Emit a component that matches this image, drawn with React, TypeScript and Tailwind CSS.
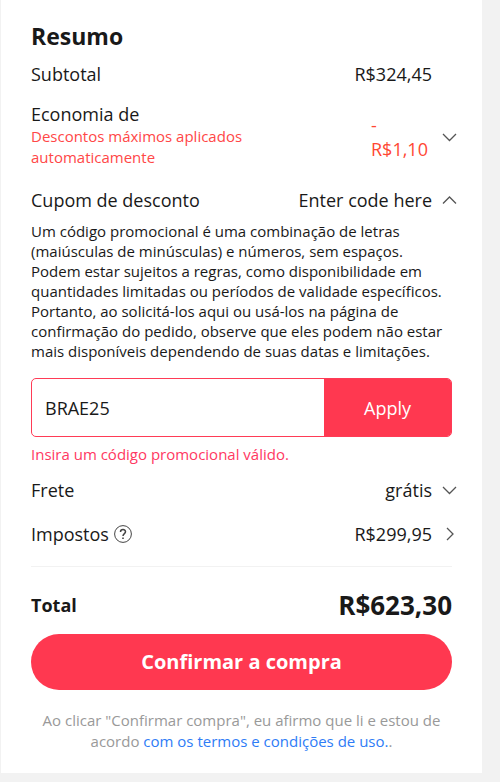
import React, { useState } from 'react';

type ChevronProps = {
  direction: 'up' | 'down' | 'right';
};

const paths = {
  up: 'M3 13.5 L9.5 7 L16 13.5',
  down: 'M3 7 L9.5 13.5 L16 7',
  right: 'M7 4 L13 10 L7 16',
};

const Chevron: React.FC<ChevronProps> = ({ direction }) => (
  <svg
    viewBox="0 0 20 20"
    className="-mr-2 ml-2 h-5 w-5 shrink-0"
    fill="none"
    stroke="#555"
    strokeWidth="1.3"
    aria-hidden="true"
  >
    <path d={paths[direction]} />
  </svg>
);

const HelpIcon = () => (
  <svg viewBox="0 0 20 20" className="h-5 w-5" fill="none" stroke="#444" aria-hidden="true">
    <circle cx="10" cy="10" r="8.4" strokeWidth="1" />
    <path d="M7.5 8 C7.5 4.7 12.5 4.8 12.5 7.8 C12.5 9.6 10 9.6 10 12" strokeWidth="1.5" />
    <path d="M10 13.4 V15" strokeWidth="1.6" />
  </svg>
);

const App: React.FC = () => {
  const [code, setCode] = useState('BRAE25');

  return (
    <div className="min-h-screen bg-[#f2f2f2] pr-[18px] pb-2 pl-px font-['Open_Sans',sans-serif] text-lg leading-6 font-medium text-[#191919]">
      <main className="bg-white px-[30px] pt-5 pb-[21px]">
        <h1 className="text-[23px] leading-8 font-bold">Resumo</h1>

        <div className="mt-[10px] flex items-center justify-between pr-5">
          <span>Subtotal</span>
          <span>R$324,45</span>
        </div>

        {/* Discounts */}
        <div className="mt-4 flex items-center justify-between">
          <div className="w-[240px]">
            <div>Economia de</div>
            <p className="text-[15px] leading-[21px] font-normal text-[#ff4747]">
              Descontos máximos aplicados automaticamente
            </p>
          </div>
          <button type="button" aria-label="Ver descontos" className="flex items-center pt-1 text-left text-[#ff4733]">
            <span className="mr-1 w-[57px]">
              -<br />
              R$1,10
            </span>
            <Chevron direction="down" />
          </button>
        </div>

        {/* Promo code */}
        <div className="mt-5 flex items-center justify-between">
          <label htmlFor="promo">Cupom de desconto</label>
          <button type="button" className="flex items-center" aria-expanded="true">
            Enter code here
            <Chevron direction="up" />
          </button>
        </div>
        <p className="mt-[9px] text-[15px] leading-5 font-normal">
          Um código promocional é uma combinação de letras (maiúsculas de minúsculas) e números, sem
          espaços. Podem estar sujeitos a regras, como disponibilidade em quantidades limitadas ou
          períodos de validade específicos. Portanto, ao solicitá-los aqui ou usá-los na página de
          confirmação do pedido, observe que eles podem não estar mais disponíveis dependendo de
          suas datas e limitações.
        </p>
        <form
          className="mt-[17px] flex h-[59px] overflow-hidden rounded-[5px] border border-[#ff3b56]"
          onSubmit={(e) => e.preventDefault()}
        >
          <input
            id="promo"
            value={code}
            onChange={(e) => setCode(e.target.value)}
            className="min-w-0 flex-1 px-[13px] font-normal outline-none"
          />
          <button type="submit" className="w-[127px] bg-[#ff3850] text-white">
            Apply
          </button>
        </form>
        <p className="mt-[7px] text-[15px] leading-5 font-normal text-[#ff3862]">
          Insira um código promocional válido.
        </p>

        <div className="mt-[14px] flex items-center justify-between">
          <span>Frete</span>
          <button type="button" className="flex items-center">
            grátis
            <Chevron direction="down" />
          </button>
        </div>
        <div className="mt-5 flex items-center justify-between">
          <span className="flex items-center gap-1">
            Impostos
            <button type="button" aria-label="Ajuda sobre impostos">
              <HelpIcon />
            </button>
          </span>
          <button type="button" className="flex items-center">
            R$299,95
            <Chevron direction="right" />
          </button>
        </div>

        {/* Total */}
        <div className="mt-5 flex items-center justify-between border-t border-[#f2f2f2] pt-[22px] font-bold">
          <span>Total</span>
          <span className="text-[26px] leading-8">R$623,30</span>
        </div>
        <button
          type="button"
          className="mt-[13px] h-14 w-full rounded-full bg-[#ff3850] text-xl font-bold text-white"
        >
          Confirmar a compra
        </button>
        <p className="mt-5 text-center text-[15px] leading-[21px] font-normal text-[#999]">
          Ao clicar "Confirmar compra", eu afirmo que li e estou de acordo{' '}
          <a href="#termos" className="text-[#2e7cf6]">
            com os termos e condições de uso.
          </a>
          .
        </p>
      </main>
    </div>
  );
};

export default App;
